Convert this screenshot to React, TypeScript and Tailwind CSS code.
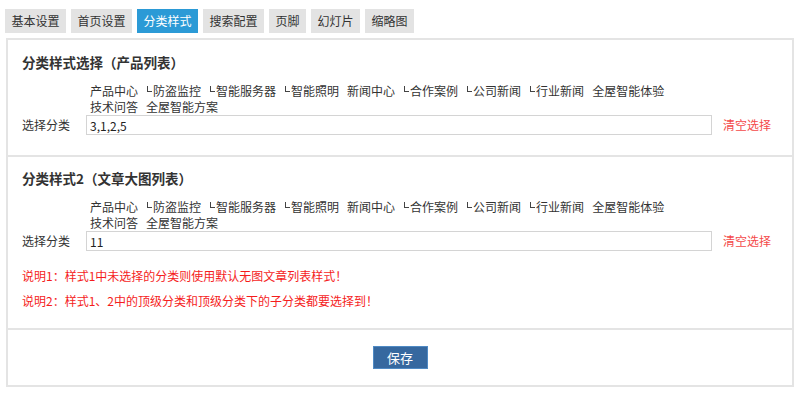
import { useState } from "react";

const TABS = ["基本设置", "首页设置", "分类样式", "搜索配置", "页脚", "幻灯片", "缩略图"];

const CATS: { name: string; sub?: boolean }[] = [
  { name: "产品中心" },
  { name: "防盗监控", sub: true },
  { name: "智能服务器", sub: true },
  { name: "智能照明", sub: true },
  { name: "新闻中心" },
  { name: "合作案例", sub: true },
  { name: "公司新闻", sub: true },
  { name: "行业新闻", sub: true },
  { name: "全屋智能体验" },
  { name: "技术问答" },
  { name: "全屋智能方案" },
];

function CatPicker({ value, onChange }: { value: string; onChange: (v: string) => void }) {
  return (
    <div>
      <div className="ml-[68px] flex w-[600px] flex-wrap text-[12px] leading-[16px] text-[#333]">
        {CATS.map((c) => (
          <span key={c.name} className="mr-[8px] cursor-pointer whitespace-nowrap">
            {c.sub && (
              <span className="mr-[1px] ml-[1px] mt-[3px] inline-block h-[6px] w-[5px] border-b border-l border-[#444] align-top" />
            )}
            {c.name}
          </span>
        ))}
      </div>
      <div className="flex h-[20px] items-center">
        <span className="w-[64px] text-[12px] text-[#333]">选择分类</span>
        <input
          value={value}
          onChange={(e) => onChange(e.target.value)}
          className="h-[20px] w-[626px] border border-[#d4d4d4] px-[3px] text-[12px] text-[#222] outline-none"
        />
        <button type="button" onClick={() => onChange("")} className="ml-[11px] text-[12px] text-[#f44a4a]">
          清空选择
        </button>
      </div>
    </div>
  );
}

export default function App() {
  const [tab, setTab] = useState(2);
  const [style1, setStyle1] = useState("3,1,2,5");
  const [style2, setStyle2] = useState("11");

  return (
    <div className="h-[396px] w-[800px] bg-white font-['Noto_Sans_CJK_SC','Noto_Sans',sans-serif]">
      <div className="flex gap-[5px] pl-[5px] pt-[9px]">
        {TABS.map((t, i) => (
          <button
            key={t}
            type="button"
            onClick={() => setTab(i)}
            className={
              "h-[24px] px-[6.5px] text-[12px] leading-[24px] " +
              (i === tab ? "bg-[#2b9ad6] text-white" : "bg-[#e3e3e3] text-[#333]")
            }
          >
            {t}
          </button>
        ))}
      </div>

      <div className="ml-[6px] mt-[5px] w-[788px] border-2 border-[#e4e4e4]">
        <div className="border-b-2 border-[#e4e4e4] pb-[20px] pl-[14px] pt-[12px]">
          <h3 className="h-[20px] text-[13.5px] font-bold leading-[20px] text-[#333]">分类样式选择（产品列表）</h3>
          <div className="mt-[11px]">
            <CatPicker value={style1} onChange={setStyle1} />
          </div>
        </div>

        <div className="border-b-2 border-[#e4e4e4] pb-[17px] pl-[14px] pt-[11px]">
          <h3 className="h-[20px] text-[13.5px] font-bold leading-[20px] text-[#333]">分类样式2（文章大图列表）</h3>
          <div className="mt-[11px]">
            <CatPicker value={style2} onChange={setStyle2} />
          </div>
          <p className="mt-[15px] text-[12px] leading-[20px] text-[#f51d1d]">说明1：样式1中未选择的分类则使用默认无图文章列表样式！</p>
          <p className="mt-[5px] text-[12px] leading-[20px] text-[#f51d1d]">说明2：样式1、2中的顶级分类和顶级分类下的子分类都要选择到！</p>
        </div>

        <div className="flex justify-center py-[16px]">
          <button type="button" className="h-[23px] w-[55px] border border-[#4f8ac4] bg-[#36689f] text-[13px] text-white">
            保存
          </button>
        </div>
      </div>
    </div>
  );
}
